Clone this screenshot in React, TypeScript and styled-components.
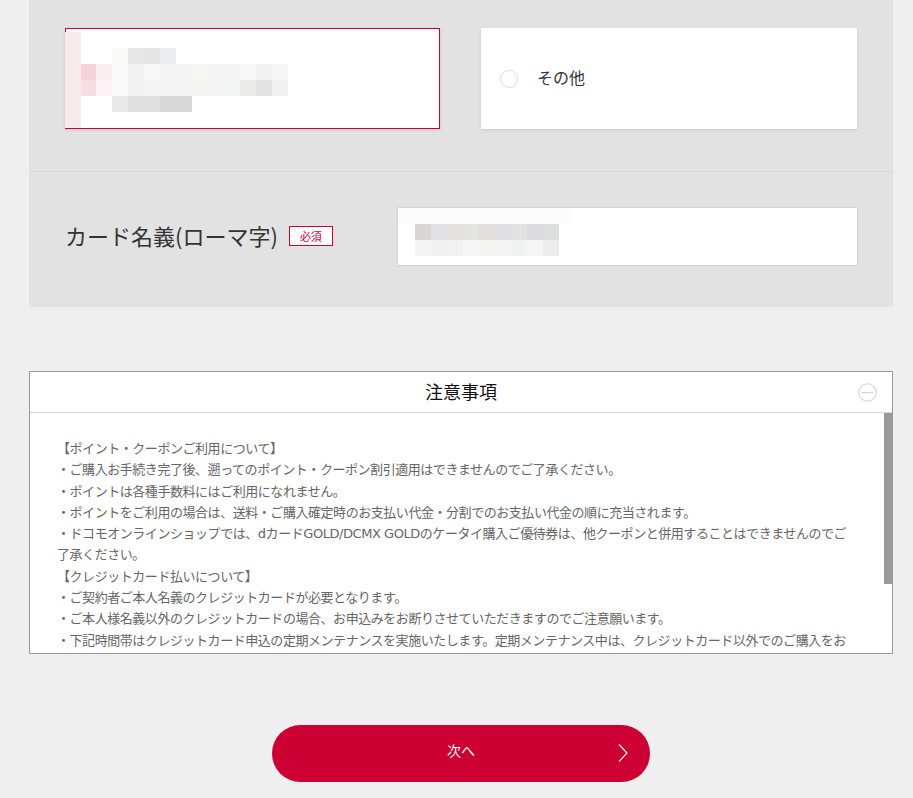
import { createGlobalStyle, styled } from "styled-components";

const GlobalStyle = createGlobalStyle`
    html, body {
        margin: 0;
        padding: 0;
        background: #efefef;
    }
    body {
        font-family: "Noto Sans CJK JP", "Noto Sans", sans-serif;
        color: #333;
    }
`;

// blurred personal data in the reference, kept as a mosaic of 16px cells
const nameMosaic: string[][] = [
    ['', '', '#f9f9f7', '#e8e8e8', '#e6e6e6', '#ecedef'],
    ['#f4d3dc', '#fbeef1', '#f9f9f9', '#f3f3f3', '#f8f8f8', '#f4f4f4', '#f5f5f5', '#f7f7f5', '#f4f4f4', '#f4f4f4', '#f8f8f8', '#f2f2f2', '#f7f7f7'],
    ['#f7dde4', '#fdf2f5', '#f9f9f9', '#f3f3f3', '#f5f5f5', '#f4f4f4', '#f5f5f5', '#f4f4f2', '#f4f4f4', '#f3f5f5', '#eaeae8', '#e4e4e4', '#f0f0f0'],
    ['', '', '#e9e9e9', '#dfdfdf', '#dfdfdf', '#d9d9d9', '#d9d9d9'],
];

const inputMosaic: string[][] = [
    ['#d9d6d6', '#e0e1e4', '#e3e2df', '#e4e4e2', '#e3dfdf', '#dfe0e4', '#e1e1e0', '#dcdcde', '#dcdedd'],
    ['#f4f4f4', '#f1f1ef', '#f2f2f2', '#f6f6f6', '#f4f4f2', '#f4f4f4', '#f0f2f1', '#f5f6f5', '#ededed'],
];

const notes = [
    '【ポイント・クーポンご利用について】',
    '・ご購入お手続き完了後、遡ってのポイント・クーポン割引適用はできませんのでご了承ください。',
    '・ポイントは各種手数料にはご利用になれません。',
    '・ポイントをご利用の場合は、送料・ご購入確定時のお支払い代金・分割でのお支払い代金の順に充当されます。',
    '・ドコモオンラインショップでは、dカードGOLD/DCMX GOLDのケータイ購入ご優待券は、他クーポンと併用することはできませんのでご了承ください。',
    '【クレジットカード払いについて】',
    '・ご契約者ご本人名義のクレジットカードが必要となります。',
    '・ご本人様名義以外のクレジットカードの場合、お申込みをお断りさせていただきますのでご注意願います。',
    '・下記時間帯はクレジットカード申込の定期メンテナンスを実施いたします。定期メンテナンス中は、クレジットカード以外でのご購入をお願いいたします。',
    '毎週火曜日 AM2:00～AM6:00',
    '・クレジットカードの有効期限が切れている場合はご利用いただけません。',
];

const Mosaic = ({ rows }: { rows: string[][] }) => (
    <MosaicBox>
        {rows.map((row, i) => (
            <MosaicRow key={i}>
                {row.map((c, j) => <Cell key={j} style={{ background: c || 'transparent' }} />)}
            </MosaicRow>
        ))}
    </MosaicBox>
);

export default function App() {
    return (
        <>
            <GlobalStyle />
            <Page>
                <Panel>
                    <ChoiceRow>
                        <ChoiceCard $selected>
                            <PinkStripe />
                            <NameArea>
                                <Mosaic rows={nameMosaic} />
                            </NameArea>
                        </ChoiceCard>
                        <ChoiceCard>
                            <Radio />
                            <ChoiceLabel>その他</ChoiceLabel>
                        </ChoiceCard>
                    </ChoiceRow>
                    <FieldRow>
                        <FieldLabel>
                            カード名義(ローマ字)
                            <Required>必須</Required>
                        </FieldLabel>
                        <InputBox>
                            <InputTopBand />
                            <InputMosaicWrap>
                                <Mosaic rows={inputMosaic} />
                            </InputMosaicWrap>
                        </InputBox>
                    </FieldRow>
                </Panel>

                <Notes>
                    <NotesHeader>
                        <NotesTitle>注意事項</NotesTitle>
                        <Toggle>
                            <svg width="19" height="19" viewBox="0 0 19 19">
                                <circle cx="9.5" cy="9.5" r="8.7" fill="none" stroke="#d4d4d4" strokeWidth="1.1" />
                                <line x1="3.5" y1="9.5" x2="15.5" y2="9.5" stroke="#d4d4d4" strokeWidth="1.1" />
                            </svg>
                        </Toggle>
                    </NotesHeader>
                    <NotesViewport>
                        <NotesText>
                            {notes.map((n, i) => <p key={i}>{n}</p>)}
                        </NotesText>
                        <ScrollThumb />
                    </NotesViewport>
                </Notes>

                <ButtonRow>
                    <NextButton>
                        次へ
                        <Chevron width="12" height="20" viewBox="0 0 12 20">
                            <polyline points="2,1.5 10,10 2,18.5" fill="none" stroke="#fff" strokeWidth="1.1" />
                        </Chevron>
                    </NextButton>
                </ButtonRow>
            </Page>
        </>
    );
}

const Page = styled.div`
    width: 864px;
    margin-left: 29px;
    padding-bottom: 20px;
`;

const Panel = styled.div`
    background: #e2e2e2;
`;

const ChoiceRow = styled.div`
    display: grid;
    grid-template-columns: 375px 376px;
    column-gap: 41px;
    padding: 28px 36px 42px;
    border-bottom: 1px solid #d6d6d6;
`;

const ChoiceCard = styled.div<{ $selected?: boolean }>`
    position: relative;
    height: 101px;
    box-sizing: border-box;
    background: #fff;
    border: 1px solid ${({ $selected }) => $selected ? '#cc0033' : '#fff'};
    box-shadow: 0 1px 3px rgba(0, 0, 0, 0.12);
    display: flex;
    align-items: center;
`;

const PinkStripe = styled.div`
    position: absolute;
    left: -1px;
    top: 3px;
    width: 16px;
    height: 96px;
    background: #f7e9ec;
`;

const NameArea = styled.div`
    align-self: flex-start;
    padding: 19px 0 0 14px;
`;

const MosaicBox = styled.div`
    display: flex;
    flex-direction: column;
`;

const MosaicRow = styled.div`
    display: flex;
    height: 16px;
`;

const Cell = styled.span`
    display: block;
    width: 16px;
    height: 16px;
`;

const Radio = styled.span`
    width: 16px;
    height: 16px;
    border: 1px solid #dcdcdc;
    border-radius: 50%;
    margin-left: 18px;
    background: #fff;
`;

const ChoiceLabel = styled.span`
    margin-left: 19px;
    font-size: 16px;
    color: #333;
    margin-top: -3px;
`;

const FieldRow = styled.div`
    display: flex;
    align-items: center;
    padding: 36px 36px 42px;
`;

const FieldLabel = styled.div`
    width: 333px;
    display: flex;
    align-items: center;
    font-size: 22px;
    color: #333;
    margin-top: -3px;
`;

const Required = styled.span`
    margin-left: 11px;
    margin-top: 2px;
    width: 44px;
    height: 20px;
    box-sizing: border-box;
    border: 1px solid #cc0033;
    background: #fff;
    color: #cc0033;
    font-size: 11px;
    display: flex;
    align-items: center;
    justify-content: center;
`;

const InputBox = styled.div`
    position: relative;
    flex: 1;
    height: 57px;
    background: #fff;
    box-shadow: 0 0 2px rgba(0, 0, 0, 0.18);
`;

const InputTopBand = styled.div`
    width: 173px;
    height: 16px;
    margin-left: 1px;
    background: #fcfcfc;
`;

const InputMosaicWrap = styled.div`
    padding-left: 17px;
`;

const Notes = styled.section`
    margin-top: 64px;
    border: 1px solid #999;
    background: #fff;
`;

const NotesHeader = styled.div`
    position: relative;
    height: 40px;
    border-bottom: 1px solid #d6d6d6;
    display: flex;
    align-items: center;
    justify-content: center;
`;

const NotesTitle = styled.h2`
    margin: 0;
    font-size: 18px;
    font-weight: 400;
    color: #111;
    margin-top: -2px;
`;

const Toggle = styled.span`
    position: absolute;
    right: 15px;
    top: 11px;
    display: flex;
`;

const NotesViewport = styled.div`
    position: relative;
    height: 240px;
    overflow: hidden;
`;

const NotesText = styled.div`
    padding: 25px 37px 26px 27px;
    font-family: "DejaVu Sans", "Noto Sans CJK JP", sans-serif;
    font-size: 13px;
    letter-spacing: -0.45px;
    line-height: 21.3px;
    color: #666;

    p {
        margin: 0;
    }
`;

const ScrollThumb = styled.div`
    position: absolute;
    right: 0;
    top: 0;
    width: 8px;
    height: 171px;
    background: #999;
`;

const ButtonRow = styled.div`
    display: flex;
    justify-content: center;
    padding-top: 71px;
`;

const NextButton = styled.button`
    position: relative;
    width: 378px;
    height: 57px;
    padding: 0 0 7px;
    border: none;
    border-radius: 29px;
    background: #cc0033;
    color: #fff;
    font-family: "Noto Sans CJK JP", "Noto Sans", sans-serif;
    font-size: 14px;
    cursor: pointer;
`;

const Chevron = styled.svg`
    position: absolute;
    right: 21px;
    top: 18px;
`;
